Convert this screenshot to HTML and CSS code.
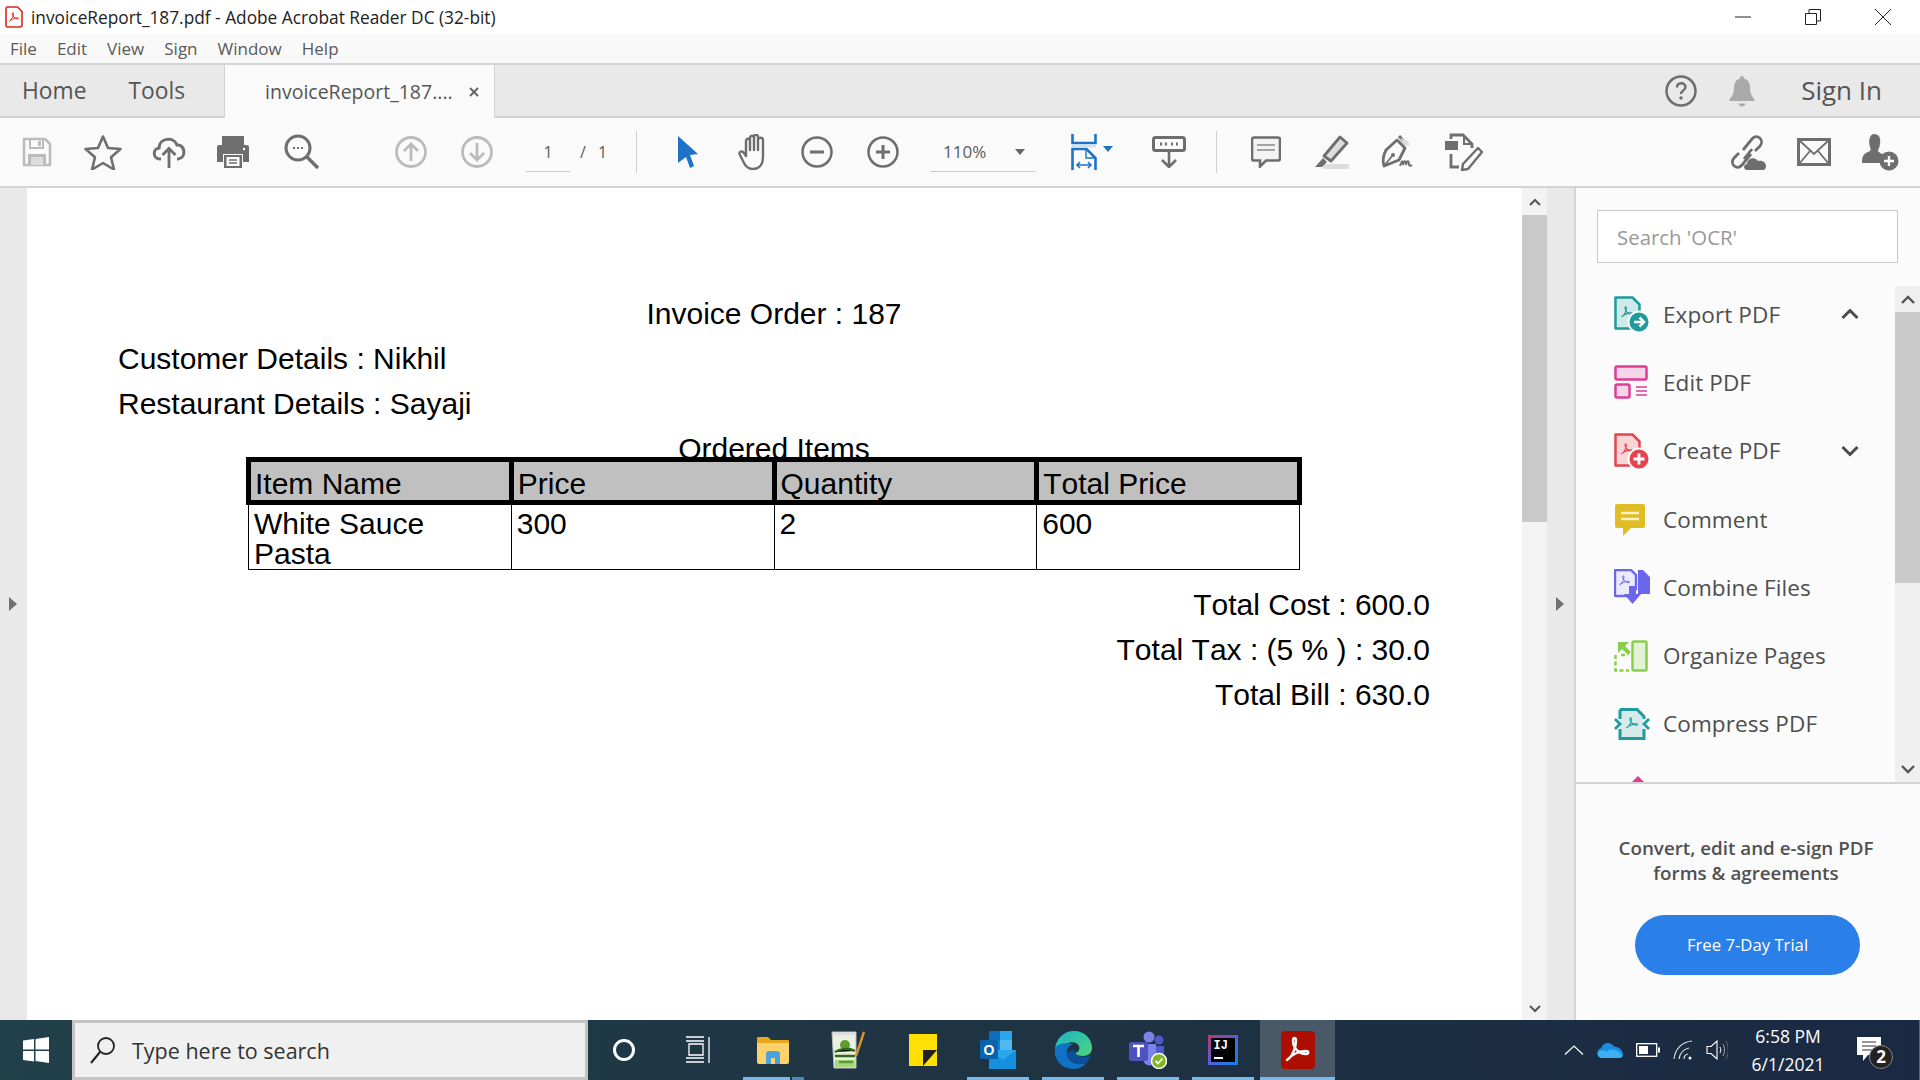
FILE: index.html
```html
<!DOCTYPE html>
<html lang="en">
<head>
  <meta charset="UTF-8" />
  <title>invoiceReport_187.pdf - Adobe Acrobat Reader DC (32-bit)</title>
  <link rel="stylesheet" href="styles.css">
</head>
<body>
  <svg class="defs" width="0" height="0">
    <symbol id="pdf-mark" viewBox="0 0 24 24">
      <path d="M3 20c4-2 8-9 8-15 0-2.500-2.500-2.500-2.500 0 0 5 6 11 11 11 2.500 0 2.500-2.500 0-2.500-5 0-12 2.500-16.500 6.500z" fill="none" stroke="currentColor" stroke-width="1.800" stroke-linejoin="round"/>
    </symbol>
  </svg>

  <div class="titlebar">
    <svg class="app-icon" width="18" height="22" viewBox="0 0 18 22"><path d="M2.500 1h10l4.500 4.500V19a2 2 0 0 1-2 2H2.500a1.500 1.500 0 0 1-1.500-1.500v-17A1.500 1.500 0 0 1 2.500 1z" fill="#fff" stroke="#e2231a" stroke-width="1.600"/><use href="#pdf-mark" x="3" y="5" width="12" height="12" color="#e2231a"/></svg>
    <span class="title-text">invoiceReport_187.pdf - Adobe Acrobat Reader DC (32-bit)</span>
    <div class="win-controls">
      <svg width="16" height="16" viewBox="0 0 16 16"><path d="M0 8h16" stroke="#222" stroke-width="1"/></svg>
      <svg width="16" height="16" viewBox="0 0 16 16"><path d="M.5 4.500h11v11H.5zM4 4.500V.5h11.500V12H11.500" fill="none" stroke="#222"/></svg>
      <svg width="16" height="16" viewBox="0 0 16 16"><path d="M0 0l16 16M16 0L0 16" stroke="#222"/></svg>
    </div>
  </div>

  <div class="menubar">
    <span>File</span><span>Edit</span><span>View</span><span>Sign</span><span>Window</span><span>Help</span>
  </div>

  <div class="tabbar">
    <span class="tab-link tab-home">Home</span>
    <span class="tab-link tab-tools">Tools</span>
    <div class="tab-active">
      <span>invoiceReport_187....</span>
      <svg width="10" height="10" viewBox="0 0 10 10"><path d="M1 1l8 8M9 1L1 9" stroke="#666" stroke-width="2"/></svg>
    </div>
    <div class="tab-right">
      <svg width="32" height="32" viewBox="0 0 32 32"><circle cx="16" cy="16" r="14.500" fill="none" stroke="#6e6e6e" stroke-width="2.500"/><path d="M12 12.500c0-5.500 8.500-5.500 8.500-.5 0 3.500-4.500 3.500-4.500 7" fill="none" stroke="#6e6e6e" stroke-width="2.400"/><circle cx="16" cy="23" r="1.700" fill="#6e6e6e"/></svg>
      <svg class="bell" width="26" height="32" viewBox="0 0 26 32"><path d="M13 1c1.500 0 2 1 2 2.500 4 1 6 4.500 6 9 0 6 2 9 4.500 12v1.500H.5V24.500C3 21.500 5 18.500 5 12.500c0-4.500 2-8 6-9C11 2 11.500 1 13 1z" fill="#aaa"/><path d="M9.500 28.500h7c-.5 4-6.500 4-7 0z" fill="#aaa"/></svg>
      <span class="sign-in">Sign In</span>
    </div>
  </div>

  <div class="toolbar">
    <button class="tool off"><svg width="32" height="32" viewBox="0 0 32 32"><path d="M3 3h21l5 5v21H3z" fill="none" stroke="#bbb" stroke-width="2.500" stroke-linejoin="round"/><path d="M9 3h13v9H9z" fill="none" stroke="#bbb" stroke-width="2"/><path d="M17 5h3v5h-3z" fill="#bbb"/><path d="M7 18h18v11H7z" fill="#bbb"/><path d="M10 21h12v8H10z" fill="#ddd"/></svg></button>
    <button class="tool"><svg width="38" height="36" viewBox="0 0 38 36"><path d="M19 2.500l5 11.500 12.500 1-9.500 8.200 3 12.300L19 29l-11 6.500 3-12.300L1.500 15 14 14z" fill="none" stroke="#6e6e6e" stroke-width="2.600" stroke-linejoin="round"/></svg></button>
    <button class="tool"><svg width="34" height="34" viewBox="0 0 34 34"><path d="M9 24H8C1 24 0 14 7 13c0-10 15-12 18-3 8-1 10 13 1 14h-1" fill="none" stroke="#6e6e6e" stroke-width="3"/><path d="M17 33V14M10.500 20L17 13.500 23.500 20" fill="none" stroke="#6e6e6e" stroke-width="2.800"/></svg></button>
    <button class="tool print"><svg width="34" height="34" viewBox="0 0 34 34"><path d="M6 1h22v9H6z" fill="#6e6e6e"/><path d="M3 10h28a2 2 0 0 1 2 2v15h-6v-8H7v8H1V12a2 2 0 0 1 2-2z" fill="#6e6e6e"/><path d="M8 20h18v13H8z" fill="#6e6e6e"/><path d="M10.500 22h13v9h-13z" fill="#fff"/><path d="M13 25h8M13 28h8" stroke="#6e6e6e" stroke-width="1.500"/><circle cx="28" cy="14" r="1.200" fill="#fff"/></svg></button>
    <button class="tool find"><svg width="36" height="36" viewBox="0 0 36 36"><circle cx="14" cy="14" r="12" fill="none" stroke="#6e6e6e" stroke-width="3"/><path d="M23 23l11 11" stroke="#6e6e6e" stroke-width="3.400"/><path d="M9 14h2M13 14h2M17 14h2" stroke="#6e6e6e" stroke-width="2"/></svg></button>
    <button class="tool off page-up"><svg width="32" height="32" viewBox="0 0 32 32"><circle cx="16" cy="16" r="14.500" fill="none" stroke="#bbb" stroke-width="2.800"/><path d="M16 25V8M9 15l7-7 7 7" fill="none" stroke="#bbb" stroke-width="2.800"/></svg></button>
    <button class="tool off"><svg width="32" height="32" viewBox="0 0 32 32"><circle cx="16" cy="16" r="14.500" fill="none" stroke="#bbb" stroke-width="2.800"/><path d="M16 7v17M9 17l7 7 7-7" fill="none" stroke="#bbb" stroke-width="2.800"/></svg></button>
    <div class="page-box"><span class="page-input">1</span><span class="page-of">/</span><span>1</span></div>
    <div class="sep sep-nav"></div>
    <button class="tool pointer"><svg width="24" height="34" viewBox="0 0 24 34"><path d="M2 1l20 18-8 1 4 11-4 2-4-11-8 6z" fill="#1e73c8"/></svg></button>
    <button class="tool hand"><svg width="34" height="36" viewBox="0 0 34 36"><path d="M8 22V7c0-3 4-3 4 0v9-12c0-3 4-3 4 0v12V3c0-3 4-3 4 0v13V6c0-3 5-3 5 0v17c0 8-4 12-10 12-5 0-7-2-9-6l-4-8c-2-3 2-5 4-2z" fill="none" stroke="#6e6e6e" stroke-width="2.400" stroke-linejoin="round"/></svg></button>
    <button class="tool minus"><svg width="32" height="32" viewBox="0 0 32 32"><circle cx="16" cy="16" r="14.500" fill="none" stroke="#6e6e6e" stroke-width="2.500"/><path d="M9 16h14" stroke="#6e6e6e" stroke-width="3"/></svg></button>
    <button class="tool"><svg width="32" height="32" viewBox="0 0 32 32"><circle cx="16" cy="16" r="14.500" fill="none" stroke="#6e6e6e" stroke-width="2.500"/><path d="M9 16h14M16 9v14" stroke="#6e6e6e" stroke-width="3"/></svg></button>
    <div class="zoom-box"><span>110%</span><i class="caret"></i></div>
    <button class="tool fit"><svg width="26" height="36" viewBox="0 0 26 36"><path d="M1.500 0v9h23V0M1.500 36V15h14l9 9v12" fill="none" stroke="#1e73c8" stroke-width="2.600"/><path d="M15 15v9h9" fill="none" stroke="#1e73c8" stroke-width="1.400"/><path d="M1 12h24" stroke="#cfe0f0" stroke-width="3"/><path d="M6 31h14M9 28l-3 3 3 3M17 28l3 3-3 3" fill="none" stroke="#1e73c8" stroke-width="1.600"/></svg><i class="caret blue"></i></button>
    <button class="tool read"><svg width="34" height="32" viewBox="0 0 34 32"><rect x="1.500" y="1.500" width="31" height="13" rx="2" fill="none" stroke="#6e6e6e" stroke-width="3"/><path d="M8 8h2M13 8h2M19 8h2M24 8h2" stroke="#6e6e6e" stroke-width="3"/><path d="M17 14v17M10 24l7 7 7-7" fill="none" stroke="#6e6e6e" stroke-width="2.600"/></svg></button>
    <div class="sep sep-view"></div>
    <button class="tool"><svg width="30" height="32" viewBox="0 0 30 32"><path d="M3 1.500h24a2 2 0 0 1 2 2v19a2 2 0 0 1-2 2H15l-6 6v-6H3a2 2 0 0 1-2-2v-19a2 2 0 0 1 2-2z" fill="#f3f3f3" stroke="#6e6e6e" stroke-width="2.600"/><path d="M6 9h18M6 14h18" stroke="#8a8a8a" stroke-width="1.600"/></svg></button>
    <button class="tool"><svg width="34" height="34" viewBox="0 0 34 34"><path d="M8 29h26v5H8z" fill="#ddd"/><path d="M25 2l7 6-16 18-7-5z" fill="#ddd" stroke="#6e6e6e" stroke-width="2.800" stroke-linejoin="round"/><path d="M8 23l4 4-5 5-7 0z" fill="#6e6e6e"/></svg></button>
    <button class="tool"><svg width="36" height="34" viewBox="0 0 36 34"><path d="M19 1l7 8" stroke="#6e6e6e" stroke-width="3"/><path d="M20 3l8 3 2 4-5 1z" fill="#ddd"/><path d="M17 5l8 8-6 12-15 6c-2-6 0-12 2-16z" fill="none" stroke="#6e6e6e" stroke-width="2.800" stroke-linejoin="round"/><path d="M4 31l8-10" stroke="#6e6e6e" stroke-width="1.800"/><circle cx="13" cy="20" r="2" fill="#6e6e6e"/><path d="M20 31c2-6 3-6 3-1 1-5 3-5 3 0 1-5 3-5 3 0 1 1 2 1 3 0" fill="none" stroke="#6e6e6e" stroke-width="2"/></svg></button>
    <button class="tool"><svg width="38" height="38" viewBox="0 0 38 38"><path d="M0 8h13v9H0z" fill="#6e6e6e"/><path d="M6 6V2h12l9 9v4" fill="none" stroke="#6e6e6e" stroke-width="2.800"/><path d="M19 2v9h8" fill="none" stroke="#6e6e6e" stroke-width="2"/><path d="M6 21v13h8" fill="none" stroke="#6e6e6e" stroke-width="2.800"/><path d="M33 15l4 4-14 17-6 1 1-6z" fill="none" stroke="#6e6e6e" stroke-width="2.400" stroke-linejoin="round"/></svg></button>
    <div class="toolbar-right">
      <button class="tool"><svg width="38" height="38" viewBox="0 0 38 38"><path d="M14 17l9-11c5-6 13 1 8 7l-5 5" fill="none" stroke="#6e6e6e" stroke-width="2.800"/><path d="M22 21l-9 11c-5 6-13-1-8-7l5-5" fill="none" stroke="#6e6e6e" stroke-width="2.800"/><path d="M15 26l8-10" stroke="#6e6e6e" stroke-width="2.800"/><path d="M18 37c-4 0-4-6 0-6 0-6 8-8 11-3 5-1 8 2 8 5 0 2-1 4-3 4z" fill="#6e6e6e"/></svg></button>
      <button class="tool"><svg width="34" height="28" viewBox="0 0 34 28"><rect x="1.500" y="1.500" width="31" height="25" fill="#fafafa" stroke="#6e6e6e" stroke-width="3"/><path d="M2 2l15 14L32 2M2 26l11-13M32 26L21 13" fill="none" stroke="#6e6e6e" stroke-width="1.800"/></svg></button>
      <button class="tool"><svg width="38" height="38" viewBox="0 0 38 38"><path d="M13 1c5 0 7 4 6 10 0 3-2 5-2 7 1 2 5 3 8 5-3 1-5 4-5 7H1c0-6 1-9 6-11 3-1 3-2 2-5-2-7 0-13 4-13z" fill="#6e6e6e"/><circle cx="28" cy="28" r="9.500" fill="#6e6e6e"/><path d="M28 23v10M23 28h10" stroke="#fff" stroke-width="2.400"/></svg></button>
    </div>
  </div>

  <div class="workspace">
    <div class="side-strip"><i class="tri"></i></div>
    <div class="doc">
      <div class="doc-line center">Invoice Order : 187</div>
      <div class="doc-line">Customer Details : Nikhil</div>
      <div class="doc-line">Restaurant Details : Sayaji</div>
      <div class="doc-line center ordered">Ordered Items</div>
      <table class="items">
        <tr><th>Item Name</th><th>Price</th><th>Quantity</th><th>Total Price</th></tr>
        <tr><td>White Sauce Pasta</td><td>300</td><td>2</td><td>600</td></tr>
      </table>
      <div class="totals">
        <div class="doc-line right">Total Cost : 600.0</div>
        <div class="doc-line right">Total Tax : (5 % ) : 30.0</div>
        <div class="doc-line right">Total Bill : 630.0</div>
      </div>
    </div>
    <div class="doc-scroll">
      <svg class="arrow" width="12" height="8" viewBox="0 0 12 8"><path d="M1 7l5-5 5 5" fill="none" stroke="#555" stroke-width="2"/></svg>
      <div class="doc-thumb"></div>
      <svg class="arrow arrow-end" width="12" height="8" viewBox="0 0 12 8"><path d="M1 1l5 5 5-5" fill="none" stroke="#555" stroke-width="2"/></svg>
    </div>
    <div class="side-strip"><i class="tri"></i></div>

    <aside class="panel">
      <div class="search-box">Search 'OCR'</div>
      <div class="tools-area">
        <ul class="tool-list">
          <li>
            <span class="ti"><svg width="36" height="36" viewBox="0 0 36 36"><path d="M1.500 1.500h17l7 7v24h-24z" fill="#cfe8e8" stroke="#1f9a9d" stroke-width="2.500" stroke-linejoin="round"/><use href="#pdf-mark" x="6" y="9" width="14" height="14" color="#1f9a9d"/><circle cx="25" cy="26" r="10.500" fill="#1f9a9d" stroke="#fafafa" stroke-width="2"/><path d="M20 26h9M25.500 21.500l4.500 4.500-4.500 4.500" fill="none" stroke="#fff" stroke-width="2.500"/></svg></span>
            Export PDF
            <svg class="chev" width="18" height="12" viewBox="0 0 18 12"><path d="M1.500 10L9 2.500 16.500 10" fill="none" stroke="#4b4b4b" stroke-width="3"/></svg>
          </li>
          <li>
            <span class="ti"><svg width="34" height="34" viewBox="0 0 34 34"><rect x="1.500" y="1.500" width="31" height="13" rx="1.500" fill="#f6d5e8" stroke="#dd3c98" stroke-width="2.500"/><rect x="1.500" y="19.500" width="14" height="13" rx="1.500" fill="#f6d5e8" stroke="#dd3c98" stroke-width="2.500"/><path d="M22 22h11M22 26h11M22 30h11" stroke="#dd3c98" stroke-width="1.500"/></svg></span>
            Edit PDF
          </li>
          <li>
            <span class="ti"><svg width="36" height="36" viewBox="0 0 36 36"><path d="M1.500 1.500h17l7 7v24h-24z" fill="#f8d5d6" stroke="#e5444e" stroke-width="2.500" stroke-linejoin="round"/><use href="#pdf-mark" x="6" y="9" width="14" height="14" color="#e5444e"/><circle cx="25" cy="26" r="10.500" fill="#e5444e" stroke="#fafafa" stroke-width="2"/><path d="M25 20.500v11M19.500 26h11" stroke="#fff" stroke-width="2.800"/></svg></span>
            Create PDF
            <svg class="chev" width="18" height="12" viewBox="0 0 18 12"><path d="M1.500 2L9 9.500 16.500 2" fill="none" stroke="#4b4b4b" stroke-width="3"/></svg>
          </li>
          <li>
            <span class="ti"><svg width="32" height="33" viewBox="0 0 32 33"><path d="M3 1h26a2 2 0 0 1 2 2v20a2 2 0 0 1-2 2H17l-8 8v-8H3a2 2 0 0 1-2-2V3a2 2 0 0 1 2-2z" fill="#e0bd24"/><path d="M7 10h18M7 16h18" stroke="#fff3c4" stroke-width="2.500"/></svg></span>
            Comment
          </li>
          <li>
            <span class="ti"><svg width="36" height="36" viewBox="0 0 36 36"><path d="M2 1h15l5 5v14h-3v7H2a1 1 0 0 1-1-1V2a1 1 0 0 1 1-1z" fill="#eceafd" stroke="#6a67ec" stroke-width="2.400"/><use href="#pdf-mark" x="4" y="5" width="13" height="13" color="#6a67ec"/><path d="M24 1h5l7 7v17H24z" fill="#6a67ec"/><path d="M15 17h7v8h5l-8.500 10L10 25h5z" fill="#6a67ec"/></svg></span>
            Combine Files
          </li>
          <li>
            <span class="ti"><svg width="34" height="32" viewBox="0 0 34 32"><rect x="18.500" y="1.500" width="14" height="29" rx="1.500" fill="#e2f2d4" stroke="#86cf4d" stroke-width="2.500"/><path d="M15 2L4 2v11l4-4 6 6 3-3-6-6z" fill="#86cf4d"/><path d="M1.500 15v15.500H15M7 15h7" fill="none" stroke="#86cf4d" stroke-width="2.500" stroke-dasharray="4 2.500"/></svg></span>
            Organize Pages
          </li>
          <li>
            <span class="ti"><svg width="36" height="32" viewBox="0 0 36 32"><path d="M6 3h23v27H6z" fill="#d5eaeb"/><path d="M6 1.500h17l7 7V11M30 21v9.500H6V21M6 11V1.500" fill="none" stroke="#1f9a9d" stroke-width="3"/><path d="M1 11l5 5-5 5M35 11l-5 5 5 5" fill="none" stroke="#1f9a9d" stroke-width="2.800"/><use href="#pdf-mark" x="11" y="8" width="14" height="14" color="#1f9a9d"/></svg></span>
            Compress PDF
          </li>
          <li>
            <span class="ti"><svg width="34" height="32" viewBox="0 0 34 32"><path d="M24 0l-7 7h14z" fill="#dd3c98"/></svg></span>
          </li>
        </ul>
        <div class="side-scroll">
          <div class="side-arrow"><svg width="14" height="9" viewBox="0 0 14 9"><path d="M1 8l6-6 6 6" fill="none" stroke="#555" stroke-width="2.400"/></svg></div>
          <div class="side-thumb"></div>
          <div class="side-arrow end"><svg width="14" height="9" viewBox="0 0 14 9"><path d="M1 1l6 6 6-6" fill="none" stroke="#555" stroke-width="2.400"/></svg></div>
        </div>
      </div>
      <div class="promo">
        <p>Convert, edit and e-sign PDF<br>forms &amp; agreements</p>
        <a class="trial">Free 7-Day Trial</a>
      </div>
    </aside>
  </div>

  <div class="taskbar">
    <div class="start"><svg width="26" height="26" viewBox="0 0 26 26"><path d="M0 3.600l11-1.500v10.400H0zM12.500 1.900L26 0v12.500H12.500zM0 14h11v10.400L0 22.900zM12.500 14H26v12l-13.500-1.900z" fill="#fff"/></svg></div>
    <div class="task-search">
      <svg width="26" height="28" viewBox="0 0 26 28"><circle cx="16" cy="10" r="8" fill="none" stroke="#222" stroke-width="1.800"/><path d="M10 16L1 27" stroke="#222" stroke-width="2"/></svg>
      <span>Type here to search</span>
    </div>
    <div class="slot-cortana"><svg width="24" height="24" viewBox="0 0 24 24"><circle cx="12" cy="12" r="9.500" fill="none" stroke="#fff" stroke-width="3"/></svg></div>
    <div class="slot-view"><svg width="28" height="28" viewBox="0 0 28 28"><path d="M2 1h18M2 5h18M5 8h14v11H5zM2 22h18M2 26h18M25 1v26" fill="none" stroke="#fff" stroke-width="1.300"/></svg></div>
    <div class="slot split"><svg width="32" height="32" viewBox="0 0 32 32"><path d="M0 4a1 1 0 0 1 1-1h10l3 3h17a1 1 0 0 1 1 1v4H0z" fill="#e8a618"/><path d="M0 9h32v19a2 2 0 0 1-2 2H2a2 2 0 0 1-2-2z" fill="#fbd26b"/><path d="M9 30v-10a3 3 0 0 1 3-3h8a3 3 0 0 1 3 3v10h-5v-6h-4v6z" fill="#4aa3df"/></svg></div>
    <div class="slot"><svg width="34" height="40" viewBox="0 0 34 40"><path d="M1 2h24v36H3z" fill="#e9f2e0" stroke="#bbb"/><path d="M3 2h22v3H3z" fill="#ddd"/><circle cx="14" cy="15" r="5" fill="#5e9e2e"/><path d="M4 22c6-4 14-4 20-1M4 26h20M8 32h14" stroke="#2f6a18" stroke-width="2.500"/><path d="M4 30h20v7H4z" fill="#7dc23c" opacity=".6"/><path d="M25 26L33 2" stroke="#d9952a" stroke-width="2.400"/></svg></div>
    <div class="slot"><svg width="28" height="32" viewBox="0 0 28 32"><path d="M0 0h28v32H0z" fill="#ffe000"/><path d="M14 32V16h14z" fill="#222"/><path d="M17 32l11-13v13z" fill="#ffe000"/></svg></div>
    <div class="slot on"><svg width="36" height="40" viewBox="0 0 36 40"><path d="M9 1h22a2 2 0 0 1 1 1v18H9z" fill="#0f6cbd"/><path d="M20 1h12v9H20z" fill="#28a8ea"/><path d="M9 10h11v10H9z" fill="#0f80cc"/><path d="M20 10h12v10H20z" fill="#50b8ef"/><path d="M9 20h27v19H9z" fill="#1490df"/><path d="M9 20l14 10 13-10" fill="#28a8ea"/><rect y="10" width="18" height="19" rx="2" fill="#0a64ad"/><text class="o-mark" x="9" y="25">O</text></svg></div>
    <div class="slot on"><svg width="38" height="38" viewBox="0 0 38 38"><defs><linearGradient id="edge-a" x1="0" y1="0" x2="1" y2="1"><stop offset="0" stop-color="#1cb5c9"/><stop offset="1" stop-color="#4fd47a"/></linearGradient></defs><path d="M1 17C3 6 11 0 20 0c11 0 18 8 18 17 0 5-4 8-9 8-4 0-7-1-8-3 4-1 5-4 4-7-2-4-8-5-13-2-5 2-9 5-11 4z" fill="url(#edge-a)"/><path d="M1 17c-2 12 7 21 18 21 5 0 10-2 13-6-8 3-17 0-19-8-1-5 2-10 7-11-8-2-17 0-19 4z" fill="#0f72c4"/><path d="M13 24c2 8 11 11 19 8 2-2 4-4 5-8-3 2-13 3-16-2-1-1 0-2 0-3-4 0-8 2-8 5z" fill="#0b4f96"/></svg></div>
    <div class="slot on"><svg width="38" height="38" viewBox="0 0 38 38"><circle cx="20" cy="6" r="5.500" fill="#7b83eb"/><circle cx="30" cy="9" r="4.500" fill="#5059c9"/><path d="M14 13h13v15a6 6 0 0 1-13 0z" fill="#7b83eb"/><path d="M27 15h8v10a5 5 0 0 1-8 2z" fill="#5059c9"/><rect y="11" width="19" height="19" rx="2" fill="#4b53bc"/><path d="M4 15h11M9.500 15v11" stroke="#fff" stroke-width="2.600"/><circle cx="30" cy="30" r="7.500" fill="#7fb51f" stroke="#fff" stroke-width="1.500"/><path d="M26.500 30l2.500 2.500 4.500-5" fill="none" stroke="#fff" stroke-width="1.800"/></svg></div>
    <div class="slot on"><svg width="30" height="30" viewBox="0 0 30 30"><defs><linearGradient id="ij-a" x1="0" y1="0" x2="1" y2="1"><stop offset="0" stop-color="#c2326f"/><stop offset=".5" stop-color="#5560d8"/><stop offset="1" stop-color="#0a84f0"/></linearGradient></defs><rect width="30" height="30" fill="url(#ij-a)"/><rect x="3" y="3" width="24" height="24" fill="#000"/><text class="ij-mark" x="5.500" y="14">IJ</text><path d="M6 23h9" stroke="#fff" stroke-width="2"/></svg></div>
    <div class="slot active"><svg width="34" height="38" viewBox="0 0 34 38"><rect width="34" height="38" rx="4" fill="#ae0e00"/><path d="M6 29c5-3 9-12 9-19 0-4-3-4-3 0 0 7 6 13 13 13 3 0 3-3 0-3-6 0-14 3-19 9z" fill="none" stroke="#fff" stroke-width="2.400" stroke-linejoin="round"/></svg></div>

    <div class="tray">
      <svg width="20" height="10" viewBox="0 0 20 10"><path d="M1 9.500L10 1l9 8.500" fill="none" stroke="#fff" stroke-width="1.200"/></svg>
      <svg class="cloud" width="26" height="16" viewBox="0 0 26 16"><path d="M5 16a5 5 0 0 1-1-9.800C6 0 14-1 17 4.500c5 0 9 4 9 8 0 2-1 3.500-3 3.500z" fill="#1a8ee0"/><path d="M5 16c-3 0-5-3-4-5 2-3 6-3 9-1 3-4 10-3 15 3 0 2-1 3-3 3z" fill="#3cb0f0"/></svg>
      <svg width="24" height="14" viewBox="0 0 24 14"><rect x=".7" y=".7" width="20" height="12.600" fill="none" stroke="#fff" stroke-width="1.300"/><rect x="3" y="3" width="9" height="8" fill="#fff"/><path d="M22 4.500h2v5h-2z" fill="#fff"/></svg>
      <svg width="20" height="20" viewBox="0 0 20 20"><path d="M1 19C2 9 9 2 19 1M6 19c1-6 5-10 10-11M11 19c0-3 2-5 4-5" fill="none" stroke="#ddd" stroke-width="1.200"/><circle cx="17" cy="18" r="1.500" fill="#fff"/></svg>
      <svg width="22" height="20" viewBox="0 0 22 20"><path d="M1 6.500h4L11 1v18l-6-5.500H1z" fill="none" stroke="#fff" stroke-width="1.100"/><path d="M14 7c1 2 1 4 0 6" fill="none" stroke="#fff"/><path d="M17 4c2 4 2 8 0 12" fill="none" stroke="#aaa"/><path d="M20 1c3 6 3 12 0 18" fill="none" stroke="#666"/></svg>
      <div class="clock"><div>6:58 PM</div><div>6/1/2021</div></div>
      <div class="notify">
        <svg width="24" height="26" viewBox="0 0 24 26"><path d="M0 0h24v18H11l-5 6v-6H0z" fill="#fff"/><path d="M5 5h14M5 9h14M5 13h10" stroke="#333"/></svg>
        <span class="badge">2</span>
      </div>
    </div>
  </div>
</body>
</html>
```

FILE: styles.css
```css
* {
  box-sizing: border-box;
}

html,
body {
  margin: 0;
  height: 100%;
  overflow: hidden;
}

body {
  width: 1920px;
  height: 1080px;
  display: flex;
  flex-direction: column;
  font-family: "Open Sans", sans-serif;
  color: #4b4b4b;
  background: #fafafa;
}

.defs {
  position: absolute;
}

svg {
  display: block;
  flex: none;
}

/* window title */
.titlebar {
  height: 34px;
  background: #fff;
  display: flex;
  align-items: center;
  padding-left: 5px;
}

.app-icon {
  margin-right: 8px;
}

.title-text {
  font-size: 17.300px;
  color: #222;
}

.win-controls {
  margin-left: auto;
  display: flex;
  gap: 54px;
  padding-right: 29px;
}

.menubar {
  height: 31px;
  background: #f9f9f9;
  border-bottom: 2px solid #d4d4d4;
  display: flex;
  gap: 20px;
  align-items: center;
  padding-left: 10px;
  font-size: 17px;
  color: #5a5a5a;
}

/* tabs */
.tabbar {
  height: 53px;
  background: #e9e9e9;
  border-bottom: 2px solid #d2d2d2;
  display: flex;
  align-items: center;
  font-size: 22.800px;
  color: #555;
}

.tab-home {
  margin-left: 22px;
}

.tab-tools {
  margin-left: 42px;
}

.tab-active {
  height: 53px;
  width: 271px;
  margin-left: 39px;
  margin-bottom: -2px;
  padding-left: 40px;
  background: #fafafa;
  border-left: 1px solid #d2d2d2;
  border-right: 1px solid #d2d2d2;
  display: flex;
  align-items: center;
  gap: 16px;
  font-size: 19.500px;
}

.tab-right {
  margin-left: auto;
  padding-right: 38px;
  display: flex;
  align-items: center;
}

.bell {
  margin-left: 32px;
}

.sign-in {
  margin-left: 46px;
  margin-top: -2px;
  font-size: 26px;
  font-weight: 500;
}

/* toolbar */
.toolbar {
  height: 70px;
  background: #fafafa;
  border-bottom: 2px solid #d4d4d4;
  display: flex;
  align-items: center;
  padding-left: 4px;
}

.tool {
  width: 66px;
  height: 46px;
  padding: 0;
  border: none;
  background: none;
  display: flex;
  align-items: center;
  justify-content: center;
}

.print {
  margin: 0 2px 0 -2px;
}

.find {
  padding-left: 2px;
}

.page-up {
  margin-left: 44px;
}

.page-box {
  display: flex;
  align-items: center;
  margin-left: 16px;
  font-size: 16px;
  color: #5a5a5a;
}

.page-input {
  width: 44px;
  height: 40px;
  border-bottom: 1px solid #ccc;
  text-align: center;
  line-height: 40px;
}

.page-of {
  margin: 0 12px 0 10px;
}

.sep {
  width: 1px;
  height: 42px;
  background: #d0d0d0;
}

.sep-nav {
  margin: 0 20px 0 29px;
}

.sep-view {
  margin: 0 16px 0 13px;
}

.pointer {
  padding-right: 5px;
}

.hand {
  width: 63px;
}

.minus {
  margin-left: -2px;
}

.zoom-box {
  width: 106px;
  height: 40px;
  margin-left: 14px;
  border-bottom: 1px solid #ccc;
  display: flex;
  align-items: center;
  justify-content: space-between;
  padding: 0 11px 0 13px;
  font-size: 17px;
  color: #5a5a5a;
}

.caret {
  width: 0;
  height: 0;
  border-left: 5px solid transparent;
  border-right: 5px solid transparent;
  border-top: 6px solid #666;
}

.caret.blue {
  border-top-color: #1e73c8;
  margin: -6px 0 0 6px;
}

.fit {
  margin-left: 15px;
  padding-left: 16px;
}

.read {
  margin-left: 18px;
  width: 68px;
}

.toolbar-right {
  margin-left: auto;
  display: flex;
  padding-right: 7px;
}

/* main area */
.workspace {
  flex: 1;
  display: flex;
  min-height: 0;
}

.side-strip {
  width: 27px;
  background: #e9e9e9;
  display: flex;
  align-items: center;
  justify-content: center;
}

.tri {
  width: 0;
  height: 0;
  margin-right: 2px;
  border-top: 7px solid transparent;
  border-bottom: 7px solid transparent;
  border-left: 8px solid #707070;
}

.doc {
  width: 1495px;
  background: #fff;
  padding: 103px 92px 0 91px;
  font-family: "Liberation Sans", Arial, sans-serif;
  font-size: 30px;
  font-kerning: none;
  color: #000;
}

.doc-line {
  height: 45px;
  line-height: 45px;
}

.center {
  text-align: center;
}

.right {
  text-align: right;
}

.ordered {
  height: 31px;
  overflow: hidden;
}

.items {
  width: 1056px;
  margin-left: 128px;
  border-collapse: collapse;
  table-layout: fixed;
  font-size: 30px;
}

.items th {
  height: 43px;
  padding: 4px 4px 1px;
  border: 5px solid #000;
  background: #c0c0c0;
  text-align: left;
  font-weight: 400;
  line-height: 30px;
  vertical-align: bottom;
}

.items td {
  height: 65px;
  padding: 4px 5px 0;
  border: 1px solid #000;
  line-height: 30px;
  vertical-align: top;
}

.totals {
  margin-top: 12px;
}

.doc-scroll {
  width: 25px;
  background: #f3f3f3;
  display: flex;
  flex-direction: column;
  align-items: center;
  padding-top: 10px;
}

.doc-thumb {
  width: 100%;
  height: 307px;
  margin-top: 9px;
  background: #c9c9c9;
}

.arrow-end {
  margin-top: auto;
  margin-bottom: 7px;
}

/* tools panel */
.panel {
  width: 346px;
  border-left: 2px solid #d4d4d4;
  background: #fbfbfb;
  display: flex;
  flex-direction: column;
}

.search-box {
  width: 301px;
  height: 53px;
  margin: 22px 0 19px 21px;
  padding-left: 19px;
  background: #fff;
  border: 1px solid #c8c8c8;
  line-height: 53px;
  font-size: 20.400px;
  color: #999;
}

.tools-area {
  height: 502px;
  border-bottom: 2px solid #d4d4d4;
  display: flex;
  overflow: hidden;
}

.tool-list {
  flex: 1;
  margin: -2px 0 0;
  padding: 0;
  list-style: none;
  font-size: 22.500px;
  letter-spacing: .1px;
  color: #4e4e4e;
}

.tool-list li {
  height: 68.300px;
  display: flex;
  align-items: center;
  padding-left: 38px;
}

.ti {
  width: 48px;
  margin-right: 1px;
  display: flex;
}

.tool-list li .chev {
  margin: 0 36px 0 auto;
}

.side-scroll {
  width: 25px;
  margin-top: 4px;
  background: #efefef;
  display: flex;
  flex-direction: column;
}

.side-arrow {
  height: 26px;
  display: flex;
  align-items: center;
  justify-content: center;
}

.side-arrow.end {
  margin-top: auto;
}

.side-thumb {
  height: 271px;
  background: #c9c9c9;
}

.promo {
  flex: 1;
  text-align: center;
  font-size: 18.800px;
  font-weight: 600;
  line-height: 25px;
  color: #505050;
  padding-top: 52px;
}

.promo p {
  margin: 0 0 29px;
  padding-right: 4px;
}

.trial {
  display: block;
  width: 225px;
  height: 60px;
  margin-left: 59px;
  border-radius: 30px;
  background: #2a80e8;
  color: #fff;
  font-size: 16.700px;
  font-weight: 400;
  line-height: 60px;
}

/* windows taskbar */
.taskbar {
  height: 60px;
  background: linear-gradient(90deg, #20404a 0%, #1f3543 45%, #1a2942 100%);
  display: flex;
  align-items: center;
  color: #fff;
}

.start {
  width: 72px;
  display: flex;
  justify-content: center;
}

.task-search {
  width: 516px;
  height: 60px;
  background: #f0f0f0;
  border: 3px solid #c4c4c4;
  display: flex;
  align-items: center;
  gap: 16px;
  padding-left: 15px;
  font-size: 21.500px;
  color: #333;
}

.slot-cortana {
  width: 72px;
  display: flex;
  justify-content: center;
}

.slot-view {
  width: 75px;
  display: flex;
  justify-content: center;
}

.slot {
  width: 75px;
  height: 60px;
  display: flex;
  align-items: center;
  justify-content: center;
}

.slot.on {
  background: linear-gradient(#76b9ed, #76b9ed) no-repeat center bottom / 62px 3px;
}

.slot.split {
  background:
    linear-gradient(#76b9ed, #76b9ed) no-repeat 8px 100% / 47px 3px,
    linear-gradient(#4f88b5, #4f88b5) no-repeat 57px 100% / 12px 3px;
}

.slot.active {
  background: linear-gradient(#76b9ed, #76b9ed) no-repeat center bottom / 100% 3px, #4a5967;
}

.o-mark {
  font: 700 14px "Liberation Sans", sans-serif;
  fill: #fff;
  text-anchor: middle;
}

.ij-mark {
  font: 700 12px "Liberation Mono", monospace;
  fill: #fff;
}

.tray {
  margin-left: auto;
  display: flex;
  align-items: center;
  gap: 13px;
  padding-right: 24px;
  border-right: 1px solid #5a6675;
  height: 60px;
}

.clock {
  width: 80px;
  margin-left: 7px;
  text-align: center;
  font-size: 17.500px;
  line-height: 28px;
  white-space: nowrap;
}

.notify {
  position: relative;
  width: 38px;
  margin-left: 16px;
}

.badge {
  position: absolute;
  left: 12px;
  top: 8px;
  width: 24px;
  height: 24px;
  border-radius: 50%;
  border: 1px solid #888;
  background: #222;
  text-align: center;
  font-size: 17px;
  font-weight: 700;
  line-height: 22px;
}
```
